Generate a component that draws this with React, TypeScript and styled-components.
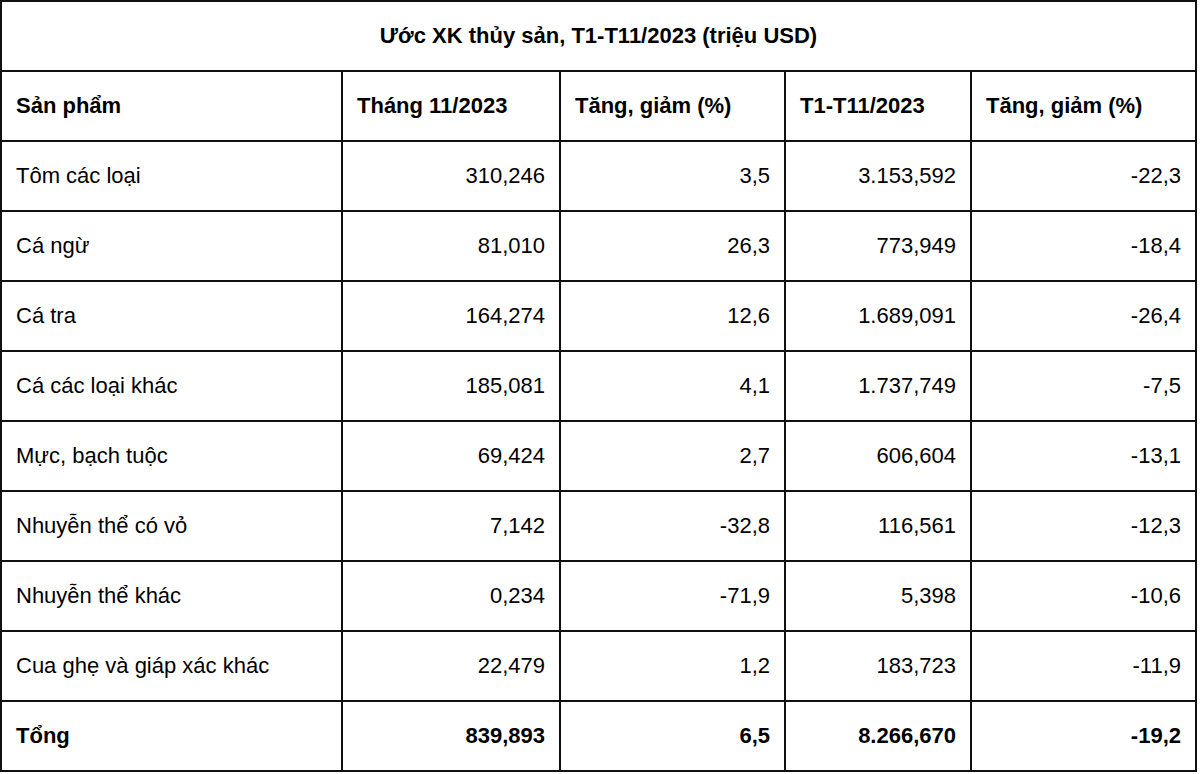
import React from "react";
import styled, { createGlobalStyle } from "styled-components";

const Global = createGlobalStyle`
  html, body { margin: 0; padding: 0; background: #fff; }
  body { font-family: "Liberation Sans", Arial, sans-serif; color: #000; }
`;

const Table = styled.table`
  width: 1197px;
  table-layout: fixed;
  border-collapse: collapse;
  font-family: "Liberation Sans", Arial, sans-serif;
  font-size: 22px;
  color: #000;
`;

const Row = styled.tr`
  height: 70px;
`;

const Cell = styled.td<{ $align?: "left" | "right" | "center"; $bold?: boolean }>`
  border: 2px solid #111;
  padding: 0 14px 0 14px;
  text-align: ${(p) => p.$align ?? "left"};
  font-weight: ${(p) => (p.$bold ? 700 : 400)};
  vertical-align: middle;
  white-space: nowrap;
  height: 68px;
`;

const cols = [341, 218, 225, 186, 225];

const data: [string, string, string, string, string][] = [
  ["Tôm các loại", "310,246", "3,5", "3.153,592", "-22,3"],
  ["Cá ngừ", "81,010", "26,3", "773,949", "-18,4"],
  ["Cá tra", "164,274", "12,6", "1.689,091", "-26,4"],
  ["Cá các loại khác", "185,081", "4,1", "1.737,749", "-7,5"],
  ["Mực, bạch tuộc", "69,424", "2,7", "606,604", "-13,1"],
  ["Nhuyễn thể có vỏ", "7,142", "-32,8", "116,561", "-12,3"],
  ["Nhuyễn thể khác", "0,234", "-71,9", "5,398", "-10,6"],
  ["Cua ghẹ và giáp xác khác", "22,479", "1,2", "183,723", "-11,9"],
];

const headers = ["Sản phẩm", "Tháng 11/2023", "Tăng, giảm (%)", "T1-T11/2023", "Tăng, giảm (%)"];
const total = ["Tổng", "839,893", "6,5", "8.266,670", "-19,2"];

export default function App() {
  return (
    <>
      <Global />
      <Table>
        <colgroup>
          {cols.map((w, i) => (
            <col key={i} style={{ width: w }} />
          ))}
        </colgroup>
        <tbody>
          <Row>
            <Cell colSpan={5} $align="center" $bold>
              Ước XK thủy sản, T1-T11/2023 (triệu USD)
            </Cell>
          </Row>
          <Row>
            {headers.map((h, i) => (
              <Cell key={i} $bold>
                {h}
              </Cell>
            ))}
          </Row>
          {data.map((r, i) => (
            <Row key={i}>
              {r.map((v, j) => (
                <Cell key={j} $align={j === 0 ? "left" : "right"}>
                  {v}
                </Cell>
              ))}
            </Row>
          ))}
          <Row>
            {total.map((v, j) => (
              <Cell key={j} $bold $align={j === 0 ? "left" : "right"}>
                {v}
              </Cell>
            ))}
          </Row>
        </tbody>
      </Table>
    </>
  );
}
